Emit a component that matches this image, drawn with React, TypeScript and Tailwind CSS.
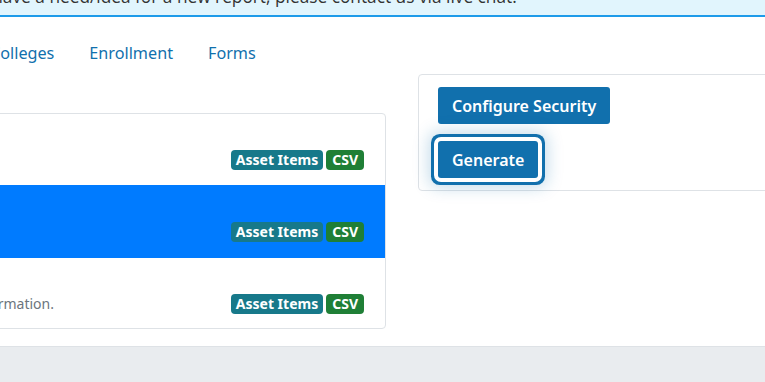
import React from "react";

function Badge({ children, color, px }: { children: React.ReactNode; color: string; px: string }) {
  return (
    <span
      className={`inline-flex h-[20px] items-center rounded-[4px] text-[14px] font-bold leading-[20px] text-white ${px} ${color}`}
    >
      {children}
    </span>
  );
}

function Badges() {
  return (
    <div className="flex items-center gap-[3px]">
      <Badge color="bg-[#17798a]" px="px-[5px]">Asset Items</Badge>
      <Badge color="bg-[#1f7f36]" px="px-[6px]">CSV</Badge>
    </div>
  );
}

export default function App() {
  return (
    <div className="flex h-[382px] w-[765px] flex-col overflow-hidden bg-white font-['Noto_Sans',sans-serif]">
      {/* alert */}
      <div className="h-[17px] shrink-0 overflow-hidden border-b-2 border-[#1e9be9] bg-[#e1f5fd]">
        <p className="ml-[-57px] mt-[-14px] whitespace-nowrap font-['Open_Sans',sans-serif] text-[17.3px] leading-[22px] text-[#333]">
          If you have a need/idea for a new report, please contact us via live chat.
        </p>
      </div>

      {/* main */}
      <div className="h-[329px] shrink-0 overflow-hidden pt-[24px]">
        <nav className="ml-[-10px] flex gap-[35px] whitespace-nowrap text-[16.2px] leading-[24px] text-[#1170ad]">
          <span>Colleges</span>
          <span>Enrollment</span>
          <span>Forms</span>
        </nav>

        <div className="mt-[9px] flex items-start">
          {/* left card */}
          <div className="ml-[-300px] mt-[39px] w-[686px] shrink-0 overflow-hidden rounded-[4px] border border-[#dee2e6]">
            <div className="flex h-[71px] items-start justify-between pl-[20px] pr-[21px] pt-[36px]">
              <span className="text-[14px] text-[#6c757d]">Asset items report</span>
              <Badges />
            </div>
            <div className="flex h-[73px] items-start justify-between bg-[#007bff] pl-[20px] pr-[21px] pt-[37px]">
              <span className="text-[14px] text-white">Asset items summary</span>
              <Badges />
            </div>
            <div className="flex h-[70px] items-start justify-between pr-[21px] pt-[36px]">
              <div className="w-[353px] whitespace-nowrap text-right text-[14px] leading-[20px] text-[#6c757d]">
                Lists asset items with their location information.
              </div>
              <Badges />
            </div>
          </div>

          {/* right card */}
          <div className="ml-[32px] flex w-[400px] shrink-0 flex-col items-start gap-[17px] rounded-[4px] border border-[#dee2e6] pb-[12px] pl-[19px] pt-[12px]">
            <button className="h-[37px] rounded-[3px] bg-[#1170ad] px-[14px] text-[16px] font-semibold text-white">
              Configure Security
            </button>
            <button className="h-[37px] rounded-[3px] bg-[#1170ad] px-[14px] text-[16px] font-semibold text-white shadow-[0_0_0_4px_#ffffff,0_0_0_7px_#1170ad,0_0_16px_9px_rgba(17,112,173,0.25)]">
              Generate
            </button>
          </div>
        </div>
      </div>

      {/* footer */}
      <div className="flex-1 border-t border-[#dee2e6] bg-[#e9ecef]" />
    </div>
  );
}
